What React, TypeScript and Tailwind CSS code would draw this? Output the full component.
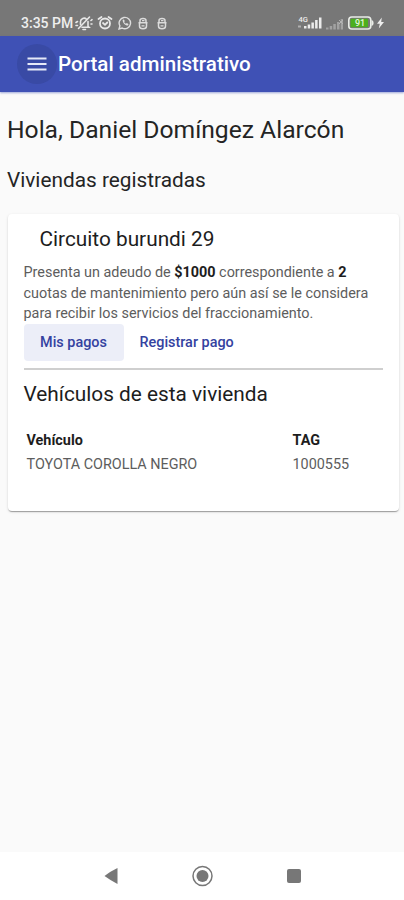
const vehicles = [{ name: 'TOYOTA COROLLA NEGRO', tag: '1000555' }];

function MutedIcon() {
  return (
    <svg width="18" height="16" viewBox="0 0 18 16" fill="none" stroke="#e8e8e8" strokeWidth="1.6" strokeLinecap="round">
      <path d="M5.500 9.500V6.500a3.500 3.500 0 0 1 6-2.300M13 6.500v4.700l1 1H7M8 14.500h2.500" />
      <path d="M14.500 2 3.500 13.500" />
      <path d="M1 7.500 2.500 6.500M1 10.500h1.500M16 5.500l1-.8M16 9h1" />
    </svg>
  );
}

function AlarmIcon() {
  return (
    <svg width="16" height="16" viewBox="0 0 16 16" fill="none" stroke="#e8e8e8" strokeWidth="1.800" strokeLinecap="round">
      <circle cx="8" cy="8.500" r="5" />
      <path d="M1.500 4 4.500 2M14.500 4l-3-2M6 8l2 1.800L10.300 7.500" />
    </svg>
  );
}

function WhatsappIcon() {
  return (
    <svg width="14" height="14" viewBox="0 0 14 14" fill="none" stroke="#dedede" strokeWidth="1.400">
      <path d="M1 13l.9-3.100A5.700 5.700 0 1 1 4.200 12.100z" />
      <path d="M4.700 3.700c-.4 2.900 2.500 6 5.400 5.800l.4-1.500-1.700-.9-.9.700C7 7.400 6.500 6.900 6.100 6l.7-.8L6 3.500z" fill="#dedede" stroke="none" />
    </svg>
  );
}

function HandIcon() {
  return (
    <svg width="10" height="13" viewBox="0 0 10 13" fill="none" stroke="#dcdcdc" strokeWidth="1.500">
      <path d="M2 5V3.500C2 .8 8 .8 8 3.500V5M.5 5.800h9M1.500 6v3.200c0 3.400 7 3.400 7 0V6" />
      <path d="M4 3.600h2.500M3.500 8.800h3" strokeWidth="1.200" />
    </svg>
  );
}

function SignalIcon() {
  return (
    <svg width="26" height="16" viewBox="0 0 26 16" fill="#ececec">
      <text x="1.500" y="6.500" fontSize="7.500" fontWeight="500">4G</text>
      <path d="M1 10.500h3v2H1z" fill="#b0b0b0" />
      <path d="M7 11h2.500v2.500H7zM10.700 9.500h2.500v4h-2.500zM14.400 7.500h2.500v6h-2.500zM18.100 5h2.500v8.500h-2.500zM22 2.500h2.500v11H22z" />
    </svg>
  );
}

function NoSignalIcon() {
  return (
    <svg width="20" height="14" viewBox="0 0 20 14" fill="#a2a2a2">
      <path d="M1 10.500h2.500v2H1zM4.700 9h2.500v3.500H4.700zM8.300 7h2.500v5.500H8.300zM12 5h2.500v7.500H12zM15.700 2h2.300v10.500h-2.300z" />
      <path d="m14 3 4 4m0-4-4 4" stroke="#b4b4b4" strokeWidth="1" />
    </svg>
  );
}

function BatteryIcon() {
  return (
    <svg width="26" height="14" viewBox="0 0 26 14">
      <rect x=".8" y="1" width="22" height="12" rx="3" fill="#777" stroke="#e9ece7" strokeWidth="1.600" />
      <path d="M23.500 4c2.800.5 2.800 5.500 0 6z" fill="#e9ece7" />
      <rect x="2.500" y="2.700" width="17.500" height="8.600" rx="1" fill="#4caf1e" />
      <text x="12" y="10.200" fontSize="9" fontWeight="500" textAnchor="middle" fill="#e6f5df">91</text>
    </svg>
  );
}

function StatusBar() {
  return (
    <div className="flex h-9 items-start bg-[#777777] pl-[21px] pr-5 pt-[15px] text-[#eeeeee]">
      <span className="w-[54px] whitespace-nowrap text-[14px] font-medium leading-[17px]">3:35 PM</span>
      <div className="flex h-4 items-center">
        <MutedIcon />
        <span className="ml-1 flex"><AlarmIcon /></span>
        <span className="ml-[5px] flex"><WhatsappIcon /></span>
        <span className="ml-[6px] flex"><HandIcon /></span>
        <span className="ml-[9px] flex"><HandIcon /></span>
      </div>
      <div className="ml-auto flex h-4 items-center">
        <SignalIcon />
        <span className="ml-[2px] mt-px flex"><NoSignalIcon /></span>
        <span className="ml-[3px] flex"><BatteryIcon /></span>
        <svg className="ml-[3px]" width="7" height="12" viewBox="0 0 7 12" fill="#eeeeee">
          <path d="M4.800.500 0 6.800h2.800L1.800 11.500 7 5H4.200z" />
        </svg>
      </div>
    </div>
  );
}

function Toolbar() {
  return (
    <header className="flex h-14 items-center bg-[#3f51b5] pl-[17px] shadow-[0_1px_2px_rgba(63,81,181,0.5)]">
      <button aria-label="Menú" className="flex size-10 items-center justify-center rounded-full bg-[#394aa5]">
        <svg width="20" height="14" viewBox="0 0 20 14" fill="#e6e9f8">
          <path d="M.5.500h19v2H.500zM.500 6h19v2H.500zM.500 11.500h19v2H.500z" />
        </svg>
      </button>
      <h1 className="ml-px whitespace-nowrap text-[20.600px] font-medium text-white">Portal administrativo</h1>
    </header>
  );
}

function HouseCard() {
  return (
    <section className="ml-[7.500px] mr-[5px] mt-[18px] h-[297px] rounded bg-white px-4 pt-[9px] shadow-[0_2px_1px_-1px_rgba(0,0,0,0.2),0_1px_1px_rgba(0,0,0,0.14),0_1px_3px_rgba(0,0,0,0.12)]">
      <h3 className="pl-4 text-[20.800px] leading-8 text-[#1d1d1d]">Circuito burundi 29</h3>
      <p className="mt-2 whitespace-nowrap text-[14.400px] leading-[20.700px] text-[#5d5d5d]">
        Presenta un adeudo de <strong className="text-[#1d1d1d]">$1000</strong> correspondiente a{' '}
        <strong className="text-[#1d1d1d]">2</strong>
        <br />
        cuotas de mantenimiento pero aún así se le considera
        <br />
        para recibir los servicios del fraccionamiento.
      </p>
      <div className="-mt-px flex text-[14.400px] font-medium text-[#3442a0]">
        <button className="h-[37px] w-[100px] rounded bg-[#eceef8]">Mis pagos</button>
        <button className="h-[37px] px-4">Registrar pago</button>
      </div>
      <hr className="mt-[7px] border-t-2 border-[#cfcfcf]" />
      <h3 className="mt-2 text-[20.800px] leading-8 text-[#1d1d1d]">Vehículos de esta vivienda</h3>
      <table className="mt-[19px] w-full text-left text-[14.400px] leading-6">
        <thead>
          <tr className="text-[#1d1d1d]">
            <th className="w-[266px] pl-[3px] font-bold">Vehículo</th>
            <th className="pl-[3px] font-bold">TAG</th>
          </tr>
        </thead>
        <tbody>
          {vehicles.map((v) => (
            <tr key={v.tag} className="text-[#5d5d5d]">
              <td className="pl-[3px]">{v.name}</td>
              <td className="pl-[3px]">{v.tag}</td>
            </tr>
          ))}
        </tbody>
      </table>
    </section>
  );
}

function NavigationBar() {
  return (
    <nav className="flex h-12 items-center bg-white pl-[104px] text-[#777777]">
      <svg width="14" height="18" viewBox="0 0 14 18" fill="currentColor">
        <path d="M13.500 1v16Q6 13 .5 9 6 4.500 13.500 1z" />
      </svg>
      <svg className="ml-[73px]" width="22" height="22" viewBox="0 0 22 22">
        <circle cx="11.500" cy="11" r="9.500" fill="none" stroke="currentColor" strokeWidth="1.500" />
        <circle cx="11.500" cy="11" r="6" fill="currentColor" />
      </svg>
      <div className="ml-[74px] size-[14px] rounded-[2px] bg-[#777777]" />
    </nav>
  );
}

export default function App() {
  return (
    <div className="flex h-[900px] w-[404px] flex-col overflow-hidden bg-[#fafafa] font-['Roboto',sans-serif]">
      <StatusBar />
      <Toolbar />
      <main className="flex-1">
        <h2 className="ml-[7px] mt-[22px] whitespace-nowrap text-[24.650px] leading-8 text-[#242424]">
          Hola, Daniel Domíngez Alarcón
        </h2>
        <h3 className="ml-[7px] mt-[18px] text-[20.800px] leading-8 text-[#242424]">Viviendas registradas</h3>
        <HouseCard />
      </main>
      <NavigationBar />
    </div>
  );
}
